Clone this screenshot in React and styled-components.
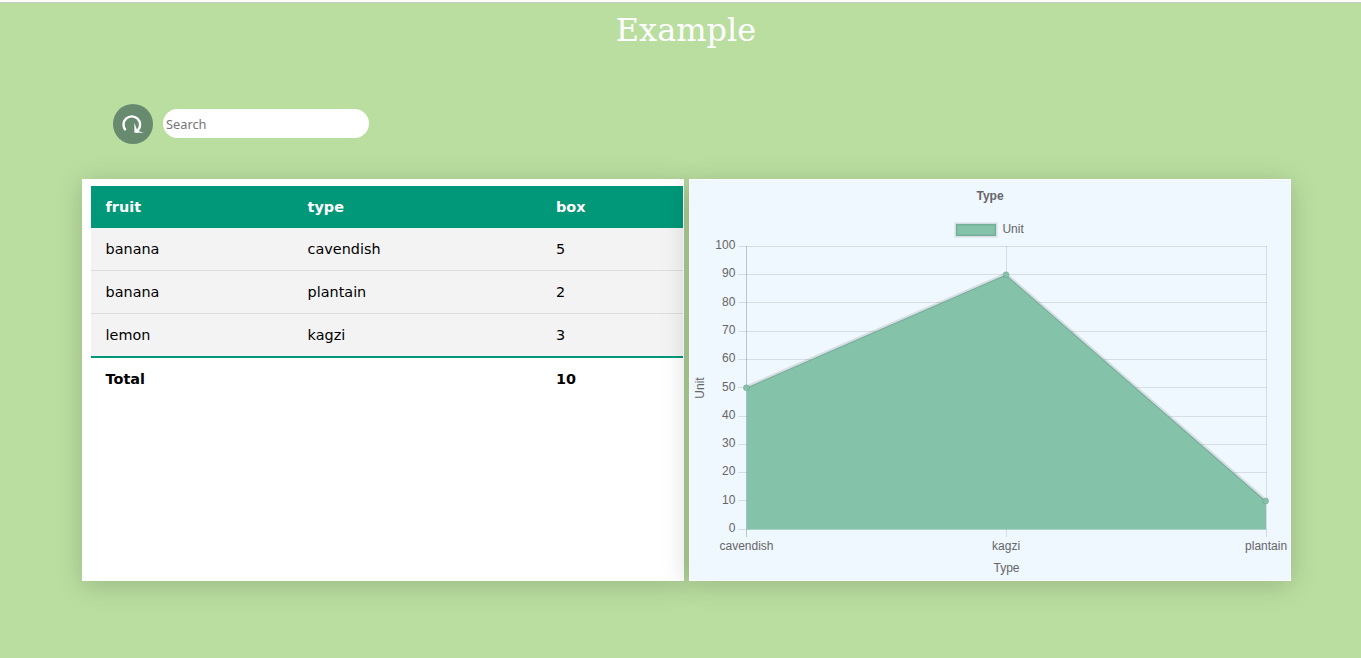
import React from "react";
import styled, { createGlobalStyle } from "styled-components";

const Global = createGlobalStyle`
  * { box-sizing: border-box; }
  body { margin: 0; background: #badea0; }
`;

const Page = styled.main`
  height: 658px;
  overflow: hidden;
  background: #badea0;
  border-top: 2px solid #fff;
`;

const Header = styled.header`
  height: 102px;
  padding: 7px 0 0 11px;
  border-top: 1px solid #c8c8c8;
  text-align: center;
`;

const Title = styled.h1`
  margin: 0;
  font: 400 32px/40px "DejaVu Serif", serif;
  color: #fff;
`;

const Toolbar = styled.div`
  display: flex;
  align-items: center;
  gap: 10px;
  height: 40px;
  margin-left: 113px;
`;

const Refresh = styled.button`
  width: 40px;
  height: 40px;
  padding: 0;
  border: 0;
  border-radius: 50%;
  background: #688a6e;
  color: #fff;
`;

const RefreshIcon = styled.svg`
  display: block;
`;

const Search = styled.input`
  width: 206px;
  height: 29px;
  margin-top: -1px;
  padding: 1px 3px;
  border: 0;
  border-radius: 15px;
  background: #fff;
  font: 400 12.8px "Noto Sans", sans-serif;
  &::placeholder { color: #757575; }
`;

const Panels = styled.div`
  display: flex;
  gap: 5px;
  margin: 35px 0 0 82px;
`;

const Panel = styled.section`
  width: 602px;
  height: 402px;
  background: ${(p) => (p.$chart ? "#eff7ff" : "#fff")};
  border: 1px solid #fff;
  box-shadow: 0 4px 26px rgba(0, 0, 0, 0.18);
  padding: ${(p) => (p.$chart ? "0" : "6px 0 0 8px")};
`;

const Table = styled.table`
  width: 592px;
  table-layout: fixed;
  border-collapse: separate;
  border-spacing: 0;
  font: 14.4px/18px "DejaVu Sans", sans-serif;
  color: #000;
`;

const Cell = styled.td`
  padding: 12px 14.6px;
  text-align: left;
  &:last-child { padding-left: 15px; }
`;

const HeadRow = styled.tr`
  background: #009879;
  color: #fff;
  font-weight: 700;
`;

const Row = styled.tr`
  background: #f3f3f3;
  ${Cell} {
    border-bottom: ${(p) => (p.$last ? "2px solid #009879" : "1px solid #ddd")};
  }
`;

const TotalRow = styled.tr`
  font-weight: 700;
`;

const Chart = styled.svg`
  display: block;
  font: 12px "Liberation Sans", sans-serif;
  fill: #666;
`;

const fruits = [
  ["banana", "cavendish", 5],
  ["banana", "plantain", 2],
  ["lemon", "kagzi", 3],
];
const ticks = [100, 90, 80, 70, 60, 50, 40, 30, 20, 10, 0];
const categories = [["cavendish", 56.5], ["kagzi", 316.5], ["plantain", 576.5]];
const points = [[56.3, 207.7], [316, 94.7], [575.7, 321]];

function AreaChart() {
  return (
    <Chart width="600" height="400" viewBox="0 0 600 400">
      <text x="300" y="20" textAnchor="middle" fontWeight="700">Type</text>
      <rect x="266" y="44" width="40" height="12" fill="#84c3a9" />
      <rect x="266" y="44" width="40" height="12" fill="none" stroke="#000" strokeOpacity="0.1" strokeWidth="3" />
      <text x="312.4" y="53">Unit</text>
      {ticks.map((tick, i) => {
        const y = 66.5 + Math.round(i * 28.26 - 0.05);
        return (
          <g key={tick}>
            <path d={`M48 ${y}H577`} stroke="#000" strokeOpacity="0.1" />
            <text x="45.4" y={69 + Math.round(i * 28.3)} textAnchor="end">{tick}</text>
          </g>
        );
      })}
      {categories.map(([name, x], i) => (
        <g key={name}>
          <path d={`M${x} 66V357`} stroke="#000" strokeOpacity={i ? 0.1 : 0.2} />
          <text x={i ? x - 0.4 : x} y="370" textAnchor="middle">{name}</text>
        </g>
      ))}
      <path d="M56.5 207.5L316 94.5L576 321V349.5H56.5Z" fill="#84c3a9" />
      <path d="M56.5 207L316 94L576 320.5" fill="none" stroke="#000" strokeOpacity="0.1" strokeWidth="3" />
      {points.map(([x, y]) => (
        <circle key={x} cx={x} cy={y} r="3" fill="#84c3a9" stroke="#000" strokeOpacity="0.1" />
      ))}
      <text x="316.5" y="392" textAnchor="middle">Type</text>
      <text transform="translate(14 208) rotate(-90)" textAnchor="middle">Unit</text>
    </Chart>
  );
}

export default function App() {
  return (
    <Page>
      <Global />
      <Header><Title>Example</Title></Header>
      <Toolbar>
        <Refresh aria-label="Refresh">
          <RefreshIcon width="40" height="40" viewBox="0 0 40 40">
            <path d="M12.6 26.2A8.3 8.3 0 1 1 25 26.2L23 27.8" fill="none" stroke="currentColor" strokeWidth="2.4" />
            <path d="M21.4 18.7V28.8H30.8L24.4 26.8Z" fill="currentColor" />
          </RefreshIcon>
        </Refresh>
        <Search placeholder="Search" />
      </Toolbar>
      <Panels>
        <Panel>
          <Table>
            <colgroup><col width="202" /><col width="248" /><col width="142" /></colgroup>
            <thead>
              <HeadRow><Cell as="th">fruit</Cell><Cell as="th">type</Cell><Cell as="th">box</Cell></HeadRow>
            </thead>
            <tbody>
              {fruits.map((r, i) => (
                <Row key={r[1]} $last={i === 2}>
                  {r.map((v, j) => <Cell key={j}>{v}</Cell>)}
                </Row>
              ))}
              <TotalRow><Cell>Total</Cell><Cell /><Cell>10</Cell></TotalRow>
            </tbody>
          </Table>
        </Panel>
        <Panel $chart><AreaChart /></Panel>
      </Panels>
    </Page>
  );
}
